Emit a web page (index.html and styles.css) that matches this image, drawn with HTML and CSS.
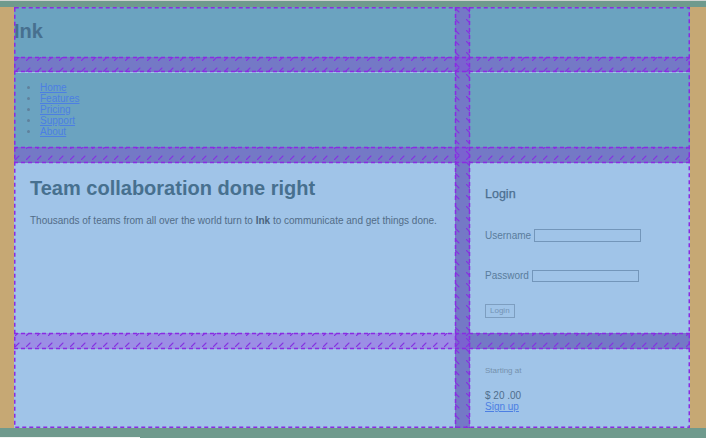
FILE: index.html
```html
<!DOCTYPE html>
<html lang="en">
<head>
<meta charset="utf-8">
<title>Ink</title>
<link rel="stylesheet" href="styles.css">
</head>
<body>
<div class="viewport">
  <div class="layout">
    <header class="cell cell-dark brand"><h1 class="logo">Ink</h1></header>
    <div class="cell cell-dark"></div>
    <nav class="cell cell-dark nav">
      <ul class="nav-list">
        <li><a href="#">Home</a></li>
        <li><a href="#">Features</a></li>
        <li><a href="#">Pricing</a></li>
        <li><a href="#">Support</a></li>
        <li><a href="#">About</a></li>
      </ul>
    </nav>
    <div class="cell cell-dark"></div>
    <main class="cell cell-light main">
      <h2 class="title">Team collaboration done right</h2>
      <p class="lead">Thousands of teams from all over the world turn to <b>Ink</b> to communicate and get things done.</p>
    </main>
    <aside class="cell cell-light login">
      <h3 class="login-title">Login</h3>
      <form class="login-form">
        <label class="field"><span>Username</span><input class="text-input" type="text"></label>
        <label class="field"><span>Password</span><input class="text-input" type="password"></label>
        <button class="btn" type="button">Login</button>
      </form>
    </aside>
    <div class="cell cell-light"></div>
    <section class="cell cell-light pricing">
      <p class="starting">Starting at</p>
      <div class="price">$ 20 .00</div>
      <a class="signup" href="#">Sign up</a>
    </section>

    <svg class="overlay" width="676" height="421" viewBox="0 0 676 421" aria-hidden="true">
      <defs>
        <pattern id="hatchRow" patternUnits="userSpaceOnUse" width="11" height="11">
          <line x1="1.5" y1="9.5" x2="5" y2="6" stroke="#8434e0" stroke-width="1.1" stroke-linecap="round"/>
        </pattern>
        <pattern id="hatchCol" patternUnits="userSpaceOnUse" width="11" height="11">
          <line x1="1.5" y1="1.5" x2="5" y2="5" stroke="#8434e0" stroke-width="1.1" stroke-linecap="round"/>
        </pattern>
      </defs>
      <!-- row gaps -->
      <rect x="0" y="50" width="676" height="15" fill="#7479c6"/>
      <rect x="0" y="140" width="676" height="16" fill="#7479c6"/>
      <rect x="0" y="326" width="441" height="16" fill="#9b8fe5"/>
      <rect x="456" y="326" width="220" height="16" fill="#7479c6"/>
      <!-- column gap -->
      <rect x="441" y="0" width="15" height="421" fill="#7479c6"/>
      <!-- intersections -->
      <rect x="441" y="50" width="15" height="15" fill="#7a63cf"/>
      <rect x="441" y="140" width="15" height="16" fill="#7a63cf"/>
      <rect x="441" y="326" width="15" height="16" fill="#7a63cf"/>
      <!-- hatching -->
      <rect x="0" y="50" width="676" height="15" fill="url(#hatchRow)"/>
      <rect x="0" y="140" width="676" height="16" fill="url(#hatchRow)"/>
      <rect x="0" y="326" width="676" height="16" fill="url(#hatchRow)"/>
      <rect x="441" y="0" width="15" height="421" fill="url(#hatchCol)"/>
      <!-- dashed outlines -->
      <g fill="none" stroke="#8a2be2" stroke-width="1.5" stroke-dasharray="4 3">
        <rect x="0.75" y="0.75" width="674.5" height="419.5"/>
        <line x1="441.5" y1="0" x2="441.5" y2="421"/>
        <line x1="455.5" y1="0" x2="455.5" y2="421"/>
        <line x1="0" y1="50.5" x2="676" y2="50.5"/>
        <line x1="0" y1="64.5" x2="676" y2="64.5"/>
        <line x1="0" y1="140.5" x2="676" y2="140.5"/>
        <line x1="0" y1="155.5" x2="676" y2="155.5"/>
        <line x1="0" y1="326.5" x2="676" y2="326.5"/>
        <line x1="0" y1="341.5" x2="676" y2="341.5"/>
      </g>
    </svg>
  </div>
</div>
<div class="bottom-strip"><div class="scroll-line"></div></div>
</body>
</html>
```
FILE: styles.css
```css
html, body {
  margin: 0;
  height: 438px;
  overflow: hidden;
}

body {
  background: #6f9a8d;
  border-top: 1px solid #cfd3d1;
  padding-top: 6px;
  box-sizing: border-box;
  font-family: "Liberation Sans", Arial, sans-serif;
}

.viewport {
  background: #c6a874;
  padding: 0 16px 0 14px;
}

.layout {
  position: relative;
  display: grid;
  grid-template-columns: 441px 220px;
  grid-template-rows: 50px 75px 170px 1fr;
  gap: 15.5px 15px;
  height: 421px;
  background: #9fc4e8;
}

.cell-dark { background: #6ba3c0; }
.cell-light { background: #a0c4e8; }

.overlay {
  position: absolute;
  left: 0;
  top: 0;
  pointer-events: none;
}

/* header */
.logo {
  margin: 0;
  padding-top: 13px;
  font-size: 20px;
  line-height: 23px;
  font-weight: bold;
  color: #47708f;
}

/* nav */
.nav-list {
  margin: 9px 0 0;
  padding-left: 26px;
  font-size: 10px;
  line-height: 11px;
  color: #5f819c;
}

.nav-list a {
  color: #4c7fe3;
}

/* main */
.main {
  padding: 14px 16px 0;
}

.title {
  margin: 0 0 15px;
  font-size: 20px;
  line-height: 23px;
  font-weight: bold;
  color: #47708f;
}

.lead {
  margin: 0;
  font-size: 10px;
  line-height: 11.5px;
  color: #526c87;
}

.lead b { color: #4a6580; }

/* login */
.login {
  padding: 24px 15px 0;
}

.login-title {
  margin: 0 0 28px;
  font-size: 12.5px;
  line-height: 14.4px;
  font-weight: normal;
  color: #4c6f90;
  -webkit-text-stroke: 0.25px #4c6f90;
}

.login-form {
  display: flex;
  flex-direction: column;
  align-items: flex-start;
}

.field {
  display: flex;
  align-items: center;
  gap: 3px;
  margin-bottom: 28px;
  font-size: 10px;
  line-height: 11.5px;
  color: #5a7c9c;
}

.field + .field { margin-bottom: 22px; }

.text-input {
  box-sizing: border-box;
  width: 107px;
  height: 12.5px;
  margin: 0;
  padding: 0;
  border: 1px solid #7396ba;
  background: transparent;
}

.btn {
  box-sizing: border-box;
  height: 14px;
  margin: 0;
  padding: 0 4px;
  border: 1px solid #7d9ec0;
  background: transparent;
  font-family: "Liberation Sans", Arial, sans-serif;
  font-size: 8px;
  line-height: 12px;
  color: #7393b5;
}

/* pricing */
.pricing {
  padding: 17px 15px 0;
}

.starting {
  margin: 0 0 15px;
  font-size: 8px;
  line-height: 9.2px;
  color: #7591ad;
}

.price {
  font-size: 10px;
  line-height: 11.5px;
  color: #4f6e8d;
}

.signup {
  display: block;
  font-size: 10px;
  line-height: 11.5px;
  color: #4c7fe3;
}

/* bottom strip */
.bottom-strip {
  padding-top: 9px;
}

.scroll-line {
  width: 140px;
  height: 1px;
  background: #f2f4f3;
}
```
